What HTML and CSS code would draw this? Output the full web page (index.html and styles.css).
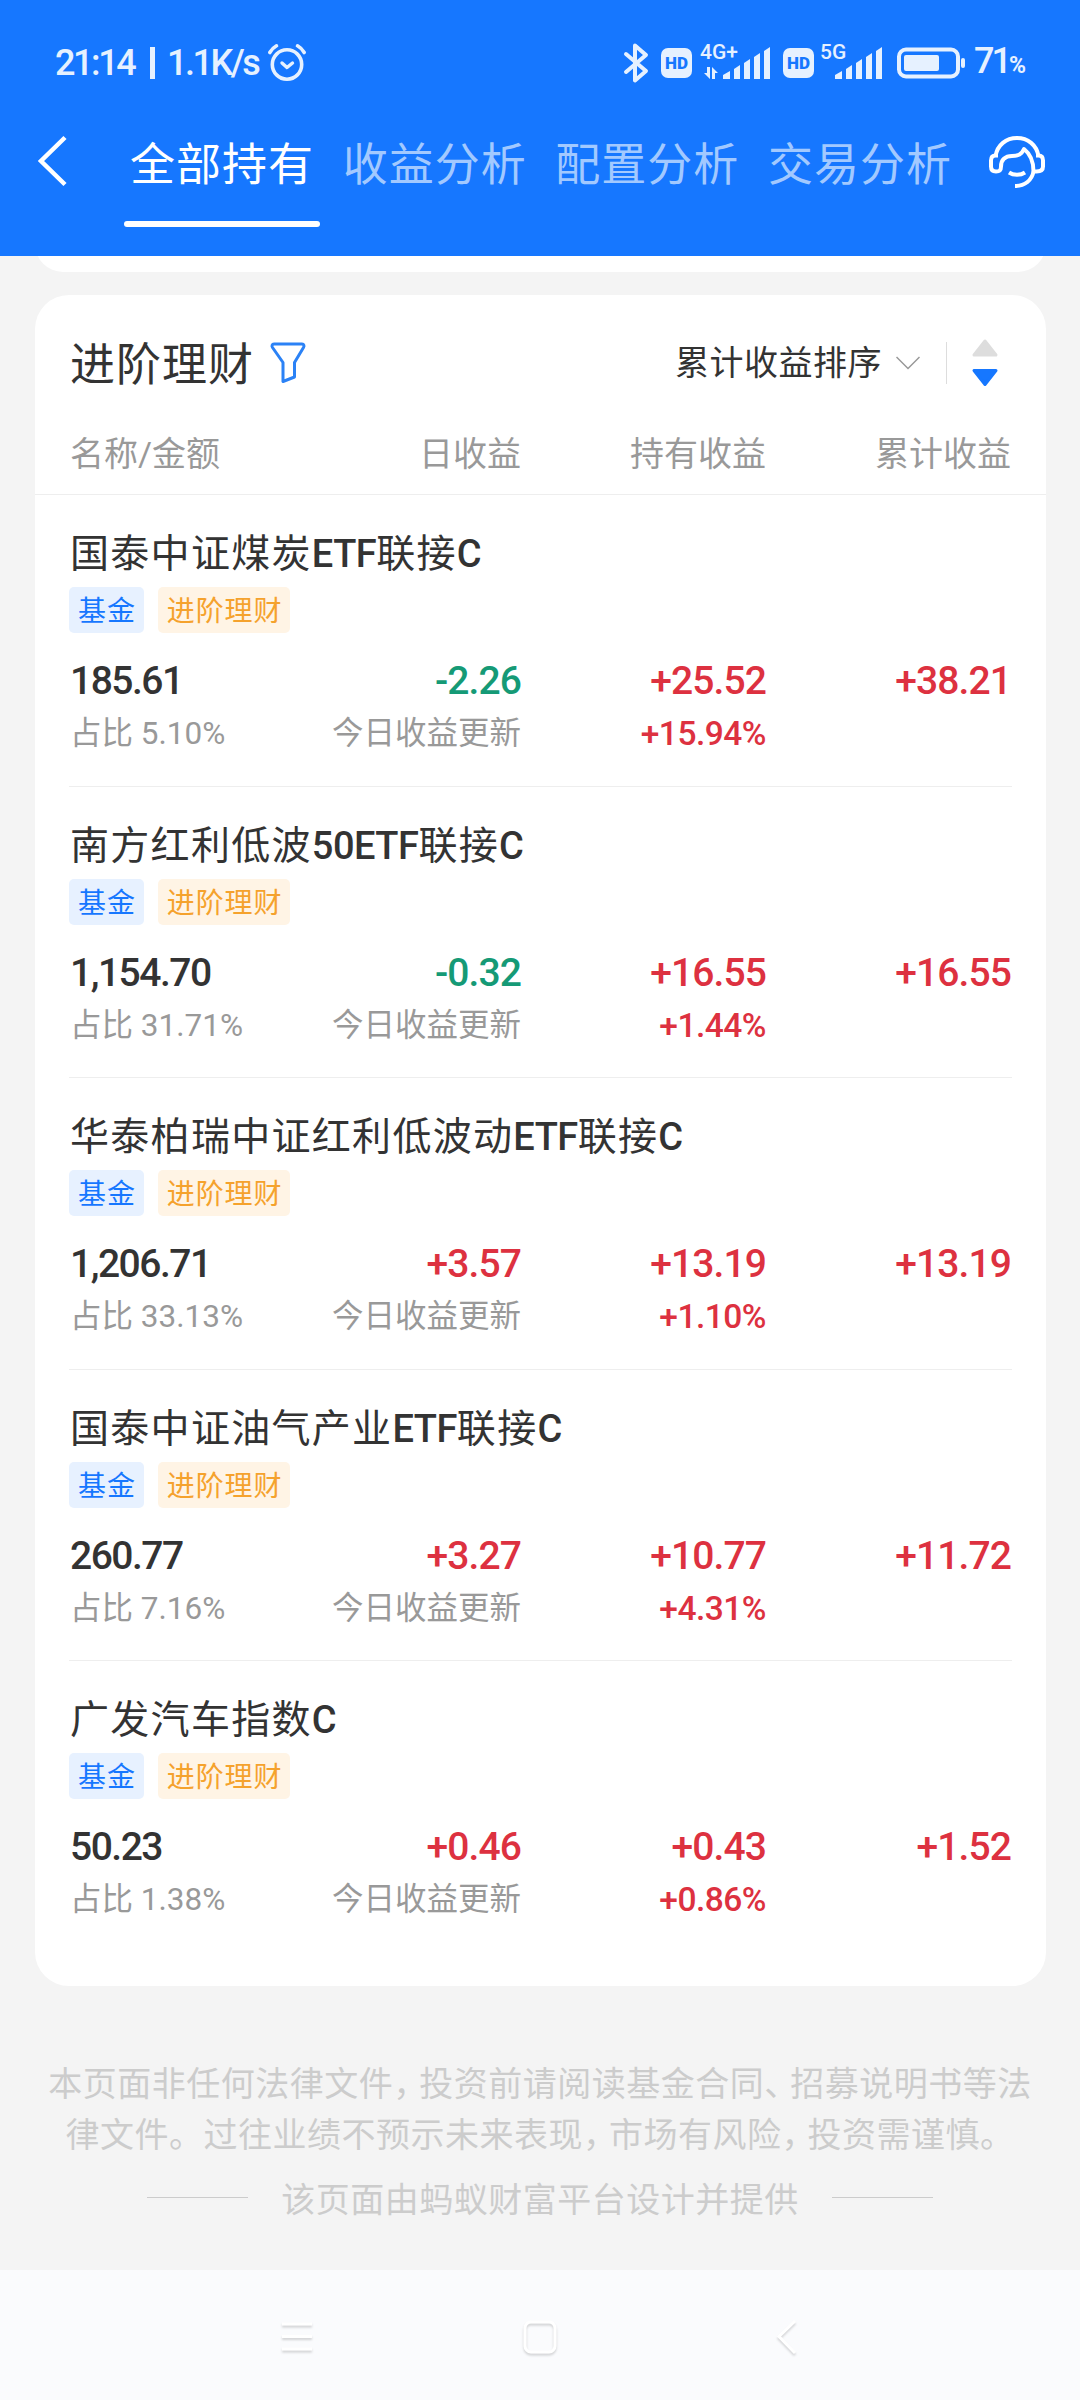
FILE: index.html
```html
<!DOCTYPE html>
<html lang="zh-CN">
<head>
    <meta charset="UTF-8">
    <meta name="viewport" content="width=device-width, initial-scale=1.0">
    <title>全部持有</title>
    <link rel="stylesheet" href="styles.css">
</head>
<body>
    <header class="header">
        <div class="status-bar">
            <span class="clock">21:14</span>
            <span class="clock-sep"></span>
            <span class="net-speed">1.1K/s</span>
            <svg class="alarm" width="40" height="40" viewBox="0 0 40 40" fill="none" stroke="#e6f1ff" stroke-linecap="round" stroke-linejoin="round">
                <circle cx="20" cy="21.5" r="14.7" stroke-width="3.6"/>
                <path d="M2.8 9.5C4.5 6.500 6.500 4.500 9.500 2.800M37.200 9.500C35.500 6.500 33.500 4.500 30.500 2.800" stroke-width="3.6"/>
                <path d="M15 20l5 4.500 5.500-4.500" stroke-width="3.4"/>
            </svg>

            <div class="status-right">
                <svg class="bluetooth" width="26" height="42" viewBox="0 0 26 42" fill="none" stroke="#e6f1ff" stroke-width="4" stroke-linecap="round" stroke-linejoin="round">
                    <path d="M3 12l20 17-11 9.500V3.500L23 13 3 30"/>
                </svg>
                <span class="hd">HD</span>
                <div class="signal signal-4g">
                    <span class="net-type">4G+</span>
                    <svg width="72" height="42" viewBox="0 2 72 42" fill="#e6f1ff">
                        <path d="M4 33h3v-6h3v12zM12 27l6 6h-3v6h-3z"/>
                        <path d="M23 39v-4l7-4v8zM34 39V29l6-4v14zM44 39V23l6-4v20zM54 39V17l6-4v26zM64 39V11l6-4v32z"/>
                    </svg>
                </div>
                <span class="hd">HD</span>
                <div class="signal signal-5g">
                    <span class="net-type">5G</span>
                    <svg width="64" height="42" viewBox="0 2 64 42" fill="#e6f1ff">
                        <path d="M15 39v-4l7-4v8zM26 39V29l6-4v14zM36 39V23l6-4v20zM46 39V17l6-4v26zM56 39V11l6-4v32z"/>
                    </svg>
                </div>
                <svg class="battery" width="70" height="32" viewBox="0 0 70 32">
                    <rect x="2" y="2.500" width="59" height="27" rx="7" fill="none" stroke="#e6f1ff" stroke-width="4"/>
                    <rect x="7" y="8" width="35" height="16" rx="2" fill="#e6f1ff"/>
                    <rect x="64" y="11" width="4" height="10" rx="2" fill="#e6f1ff"/>
                </svg>
                <span class="battery-num">71<small>%</small></span>
            </div>
        </div>

        <nav class="tabs">
            <svg class="back" width="32" height="52" viewBox="0 0 32 52" fill="none" stroke="#fff" stroke-width="4.5">
                <path d="M29 2.500L5 26l24 23.500"/>
            </svg>
            <span class="tab active">全部持有</span>
            <span class="tab">收益分析</span>
            <span class="tab">配置分析</span>
            <span class="tab">交易分析</span>
            <svg class="service" width="58" height="56" viewBox="0 0 58 56" fill="none" stroke="#fff" stroke-width="4" stroke-linejoin="round">
                <path d="M7.500 21C9.500 10 18 3 29 3s19.500 7 21.500 18"/>
                <path d="M10 20.500H7.500C4.500 20.500 3 22.500 3 25.500v6c0 3.500 1.500 5 5 5 3.800 0 5-1.500 5-5C13 25 17 21 24 21c6.500 0 9.500-1.500 12-7 6.500 5 9.500 12 9.500 22.500h3c4 0 6.500-1.500 6.500-5v-6c0-3-1.500-5-4.500-5H48"/>
                <path d="M45.500 36.500C44 45 37 51 27 51"/>
                <path d="M21 37.500c4.500 3 11.500 3 16 0"/>
            </svg>
        </nav>
    </header>

    <main class="content">
        <div class="card-prev"></div>

        <section class="card">
            <div class="card-head">
                <h2>进阶理财</h2>
                <svg class="filter" width="36" height="42" viewBox="0 0 36 42" fill="none" stroke="#2b82f6" stroke-width="3" stroke-linejoin="round">
                    <path d="M4 2h28c2 0 2.500 2 1.500 3.500L24.500 20.500V35L13 39.500v-19L2.500 5.500C1.500 4 2 2 4 2z"/>
                </svg>
                <span class="sort-label">累计收益排序</span>
                <svg class="chevron" width="24" height="15" viewBox="0 0 24 15" fill="none" stroke="#999" stroke-width="1.5">
                    <path d="M.5 1L12 12.500 23.500 1"/>
                </svg>
                <span class="sort-line"></span>
                <svg class="sort-arrows" width="28" height="50" viewBox="0 0 28 50" stroke-width="3" stroke-linejoin="round">
                    <path d="M14 3L25 17H3z" fill="#ddd" stroke="#ddd"/>
                    <path d="M14 46.500L3 32.500h22z" fill="#1677ff" stroke="#1677ff"/>
                </svg>
            </div>

            <div class="columns grid">
                <span>名称/金额</span>
                <span>日收益</span>
                <span>持有收益</span>
                <span>累计收益</span>
            </div>

            <div class="fund">
                <h3>国泰中证煤炭<b>ETF</b>联接<b>C</b></h3>
                <div class="tags"><span class="tag blue">基金</span><span class="tag orange">进阶理财</span></div>
                <div class="nums grid">
                    <span>185.61</span><span class="down">-2.26</span><span class="up">+25.52</span><span class="up">+38.21</span>
                </div>
                <div class="subs grid">
                    <span>占比 5.10%</span><span>今日收益更新</span><span class="up">+15.94%</span>
                </div>
            </div>

            <div class="fund">
                <h3>南方红利低波<b>50ETF</b>联接<b>C</b></h3>
                <div class="tags"><span class="tag blue">基金</span><span class="tag orange">进阶理财</span></div>
                <div class="nums grid">
                    <span>1,154.70</span><span class="down">-0.32</span><span class="up">+16.55</span><span class="up">+16.55</span>
                </div>
                <div class="subs grid">
                    <span>占比 31.71%</span><span>今日收益更新</span><span class="up">+1.44%</span>
                </div>
            </div>

            <div class="fund">
                <h3>华泰柏瑞中证红利低波动<b>ETF</b>联接<b>C</b></h3>
                <div class="tags"><span class="tag blue">基金</span><span class="tag orange">进阶理财</span></div>
                <div class="nums grid">
                    <span>1,206.71</span><span class="up">+3.57</span><span class="up">+13.19</span><span class="up">+13.19</span>
                </div>
                <div class="subs grid">
                    <span>占比 33.13%</span><span>今日收益更新</span><span class="up">+1.10%</span>
                </div>
            </div>

            <div class="fund">
                <h3>国泰中证油气产业<b>ETF</b>联接<b>C</b></h3>
                <div class="tags"><span class="tag blue">基金</span><span class="tag orange">进阶理财</span></div>
                <div class="nums grid">
                    <span>260.77</span><span class="up">+3.27</span><span class="up">+10.77</span><span class="up">+11.72</span>
                </div>
                <div class="subs grid">
                    <span>占比 7.16%</span><span>今日收益更新</span><span class="up">+4.31%</span>
                </div>
            </div>

            <div class="fund">
                <h3>广发汽车指数<b>C</b></h3>
                <div class="tags"><span class="tag blue">基金</span><span class="tag orange">进阶理财</span></div>
                <div class="nums grid">
                    <span>50.23</span><span class="up">+0.46</span><span class="up">+0.43</span><span class="up">+1.52</span>
                </div>
                <div class="subs grid">
                    <span>占比 1.38%</span><span>今日收益更新</span><span class="up">+0.86%</span>
                </div>
            </div>
        </section>

        <footer class="notice">
            <p>本页面非任何法律文件<i>，</i>投资前请阅读基金合同<i>、</i>招募说明书等法<br>
               律文件。过往业绩不预示未来表现<i>，</i>市场有风险<i>，</i>投资需谨慎。</p>
            <div class="provider">该页面由蚂蚁财富平台设计并提供</div>
        </footer>
    </main>

    <!-- system navigation -->
    <div class="nav-bar">
        <svg width="34" height="40" viewBox="0 0 34 40" fill="none" stroke="#fff" stroke-width="3">
            <path d="M2 6h30M2 18.500h30M2 31h30"/>
        </svg>
        <svg width="40" height="40" viewBox="0 0 40 40" fill="none" stroke="#fff" stroke-width="3">
            <rect x="5" y="4" width="30" height="30" rx="6"/>
        </svg>
        <svg class="nav-back" width="24" height="40" viewBox="0 0 24 40" fill="none" stroke="#fff" stroke-width="3">
            <path d="M20 3L4 18.500 20 35"/>
        </svg>
    </div>
</body>
</html>
```
FILE: styles.css
```css
* {
    box-sizing: border-box;
}

body {
    font-family: Roboto, "Noto Sans CJK SC", sans-serif;
    margin: 0;
    width: 1080px;
    height: 2400px;
    display: flex;
    flex-direction: column;
    background-color: #f4f4f4;
    color: #333;
    overflow: hidden;
}

svg {
    display: block;
    flex: none;
}

h2, h3, p {
    margin: 0;
    font-weight: 400;
}

/* header */
.header {
    height: 256px;
    background: #1677ff;
    color: #fff;
    flex: none;
}

.status-bar {
    display: flex;
    align-items: center;
    height: 126px;
    padding: 0 54px 0 55px;
    color: #e6f1ff;
    font-weight: 500;
    font-size: 36px;
    line-height: 40px;
}

.clock {
    width: 95px;
    letter-spacing: -2.4px;
}

.clock-sep {
    width: 5px;
    height: 32px;
    background: #e6f1ff;
    margin-right: 12px;
}

.net-speed {
    width: 100px;
    letter-spacing: -2.5px;
}

.status-right {
    display: flex;
    align-items: center;
    margin-left: auto;
}

.bluetooth {
    margin-right: 12px;
}

.hd {
    width: 31px;
    height: 30px;
    border-radius: 7px;
    background: #e6f1ff;
    color: #1677ff;
    font-size: 17px;
    font-weight: 900;
    line-height: 30px;
    text-align: center;
}

.signal {
    position: relative;
    height: 42px;
}

.signal-4g {
    width: 72px;
    margin: 0 11px 0 8px;
}

.signal-5g {
    width: 64px;
    margin: 0 13px 0 6px;
}

.net-type {
    position: absolute;
    left: 0;
    top: -1px;
    font-size: 21px;
    line-height: 22px;
}

.battery {
    margin-right: 7px;
}

.battery-num {
    width: 52px;
    letter-spacing: -3px;
    white-space: nowrap;
}

.battery-num small {
    font-size: 23px;
    font-weight: 700;
    letter-spacing: 0;
}

.tabs {
    display: flex;
    align-items: flex-start;
    height: 130px;
    padding: 9px 34px 0 36px;
}

.back {
    margin-right: 56px;
}

.tab {
    width: 196px;
    margin-right: 16.7px;
    height: 92px;
    line-height: 56px;
    padding-top: 3px;
    font-size: 45px;
    letter-spacing: 1px;
    text-align: center;
    color: #a2c9ff;
    white-space: nowrap;
}

.tab.active {
    color: #fff;
    position: relative;
}

.tab.active::after {
    content: "";
    position: absolute;
    left: 0;
    bottom: 0;
    width: 196px;
    height: 6px;
    border-radius: 3px;
    background: #fff;
}

.service {
    margin-left: auto;
}

/* list card */
.content {
    height: 2014px;
    padding: 0 34px 0 35px;
    flex: none;
}

.card-prev {
    height: 56px;
    margin-top: -40px;
    border-radius: 34px;
    background: #fff;
    clip-path: inset(40px 0 0 0);
}

.card {
    margin-top: 23px;
    height: 1691px;
    border-radius: 34px;
    background: #fff;
}

.card-head {
    display: flex;
    align-items: center;
    height: 136px;
    padding: 0 47px 0 35px;
}

.card-head h2 {
    padding-top: 5px;
    font-size: 45px;
    letter-spacing: 1px;
    line-height: 60px;
}

.filter {
    margin-left: 16px;
}

.sort-label {
    margin-left: auto;
    padding-bottom: 5px;
    font-size: 34px;
    letter-spacing: 0.5px;
}

.chevron {
    margin-left: 14px;
}

.sort-line {
    width: 1px;
    height: 42px;
    background: #ddd;
    margin: 0 24px 0 26px;
}

.grid {
    display: grid;
    grid-template-columns: 202px 250px 245px 245px;
    padding: 0 34px;
}

.grid span {
    text-align: right;
    white-space: nowrap;
}

.grid span:first-child {
    text-align: left;
    padding-left: 1px;
}

.columns {
    height: 64px;
    border-bottom: 1px solid #eee;
    font-size: 34px;
    line-height: 46px;
    color: #999;
}

.fund {
    height: 291.5px;
    padding-top: 30px;
    position: relative;
}

.fund:not(:last-child)::after {
    content: "";
    position: absolute;
    left: 34px;
    right: 34px;
    bottom: 0;
    height: 1px;
    background: #eee;
}

.fund h3 {
    padding-left: 35px;
    height: 62px;
    font-size: 39px;
    letter-spacing: 1.3px;
    line-height: 59px;
}

.fund h3 b {
    font-weight: 500;
    font-size: 38px;
    letter-spacing: -0.5px;
}

.tags {
    display: flex;
    gap: 14px;
    padding-left: 34px;
}

.tag {
    height: 46px;
    padding: 0 8px 0 9px;
    border-radius: 5px;
    font-size: 28px;
    letter-spacing: 0.9px;
    line-height: 49px;
}

.blue {
    background: #e7f1ff;
    color: #1677ff;
}

.orange {
    background: #fff4e5;
    color: #f5a22d;
}

.nums {
    margin-top: 20px;
    font-size: 39px;
    font-weight: 500;
    letter-spacing: -0.9px;
    line-height: 57px;
}

.nums span:first-child {
    letter-spacing: -1.5px;
}

.subs {
    font-size: 31.5px;
    line-height: 48px;
    color: #999;
}

.subs .up {
    font-size: 33.5px;
    font-weight: 500;
    letter-spacing: -0.5px;
}

.up {
    color: #dd3140;
}

.down {
    color: #159a76;
}

/* disclaimer */
.notice {
    margin: 73px -34px 0 -35px;
    color: #ccc;
    font-size: 34px;
    letter-spacing: 0.5px;
    text-align: center;
}

.notice p {
    line-height: 51px;
    white-space: nowrap;
}

.notice i {
    font-style: normal;
    letter-spacing: -8px;
}

.provider {
    display: flex;
    align-items: center;
    justify-content: center;
    gap: 33px;
    margin-top: 14px;
    line-height: 50px;
}

.provider::before,
.provider::after {
    content: "";
    width: 101px;
    height: 1px;
    margin-bottom: 6px;
    background: #ccc;
}

.nav-bar {
    display: flex;
    align-items: center;
    gap: 206px;
    height: 130px;
    padding: 5px 0 0 280px;
    background: #fafbfd;
}

.nav-back {
    margin-left: 9px;
}

.nav-bar svg {
    filter: drop-shadow(0 2px 1px rgba(0, 0, 0, 0.16));
}
```
